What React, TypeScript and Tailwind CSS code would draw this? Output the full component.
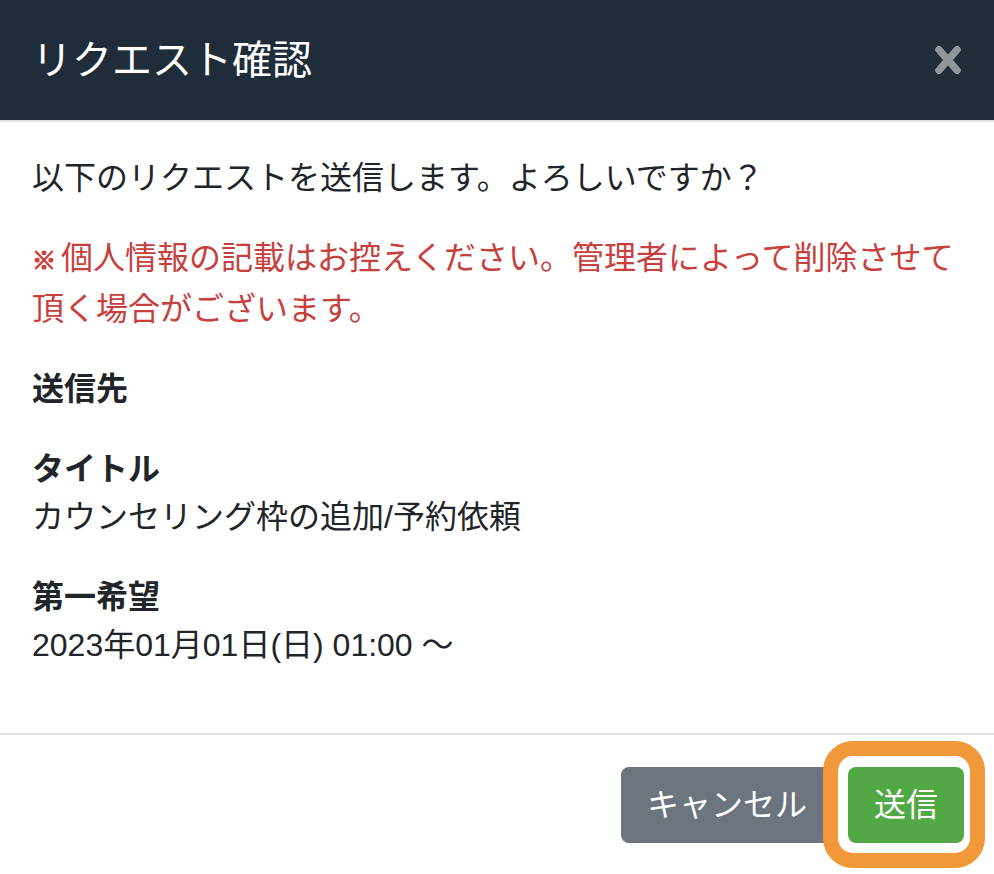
import React from "react";

export default function App() {
  const font = { fontFamily: '"Liberation Sans", "Noto Sans CJK JP", sans-serif' };
  return (
    <div
      className="w-[994px] h-[874px] overflow-hidden bg-white text-[#212529] flex flex-col"
      style={font}
    >
      <div className="h-[122px] shrink-0 bg-[#1f2c39] border-b-2 border-[#dee2e6] flex items-center justify-between pl-[32px] pr-[33px]">
        <h5 className="text-[40px] leading-[60px] text-white font-normal">リクエスト確認</h5>
        <button className="flex items-center justify-center opacity-50" aria-label="close">
          <svg width="26" height="28" viewBox="0 89 352 334" preserveAspectRatio="none">
            <path
              fill="#ffffff"
              d="M242.72 256l100.07-100.07c12.28-12.28 12.28-32.19 0-44.48l-22.24-22.24c-12.28-12.28-32.19-12.28-44.48 0L176 189.28 75.930 89.21c-12.28-12.28-32.19-12.28-44.48 0L9.21 111.45c-12.28 12.28-12.28 32.19 0 44.480L109.28 256 9.21 356.07c-12.28 12.28-12.28 32.19 0 44.48l22.24 22.24c12.28 12.28 32.2 12.28 44.48 0L176 322.72l100.07 100.07c12.28 12.28 32.2 12.28 44.48 0l22.24-22.24c12.28-12.28 12.28-32.19 0-44.48L242.72 256z"
            />
          </svg>
        </button>
      </div>

      <div className="px-[32px] pt-[32px] pb-[32px] text-[32px] leading-[48px]">
        <p className="mb-[32px]">以下のリクエストを送信します。よろしいですか？</p>
        <p className="mb-[32px] text-[#c8403e]">
          <span className="mr-[5px] font-bold text-[24px] [-webkit-text-stroke:1.2px_#c8403e]">※</span>個人情報の記載はお控えください。管理者によって削除させて頂く場合がございます。
        </p>
        <div className="mb-[32px]">
          <div className="font-bold">送信先</div>
          <div></div>
        </div>
        <div className="mb-[32px]">
          <div className="font-bold">タイトル</div>
          <div>カウンセリング枠の追加/予約依頼</div>
        </div>
        <div className="mb-[32px]">
          <div className="font-bold">第一希望</div>
          <div>2023年01月01日(日) 01:00 ～</div>
        </div>
      </div>

      <div className="border-t-2 border-[#dee2e6] pt-[32px] pr-[30px] flex justify-end gap-[15px]">
        <button className="h-[76px] px-[24px] rounded-[8px] border-2 border-[#6c757d] bg-[#6c757d] text-white text-[32px] leading-[48px]">
          キャンセル
        </button>
        <span className="relative">
          <span className="absolute -left-[25px] -right-[21px] -top-[26px] -bottom-[25px] rounded-[30px] border-[15px] border-[#f1993a] bg-white"></span>
          <button className="relative h-[76px] w-[116px] rounded-[8px] bg-[#51a845] text-white text-[32px] leading-[48px]">
            送信
          </button>
        </span>
      </div>
    </div>
  );
}
